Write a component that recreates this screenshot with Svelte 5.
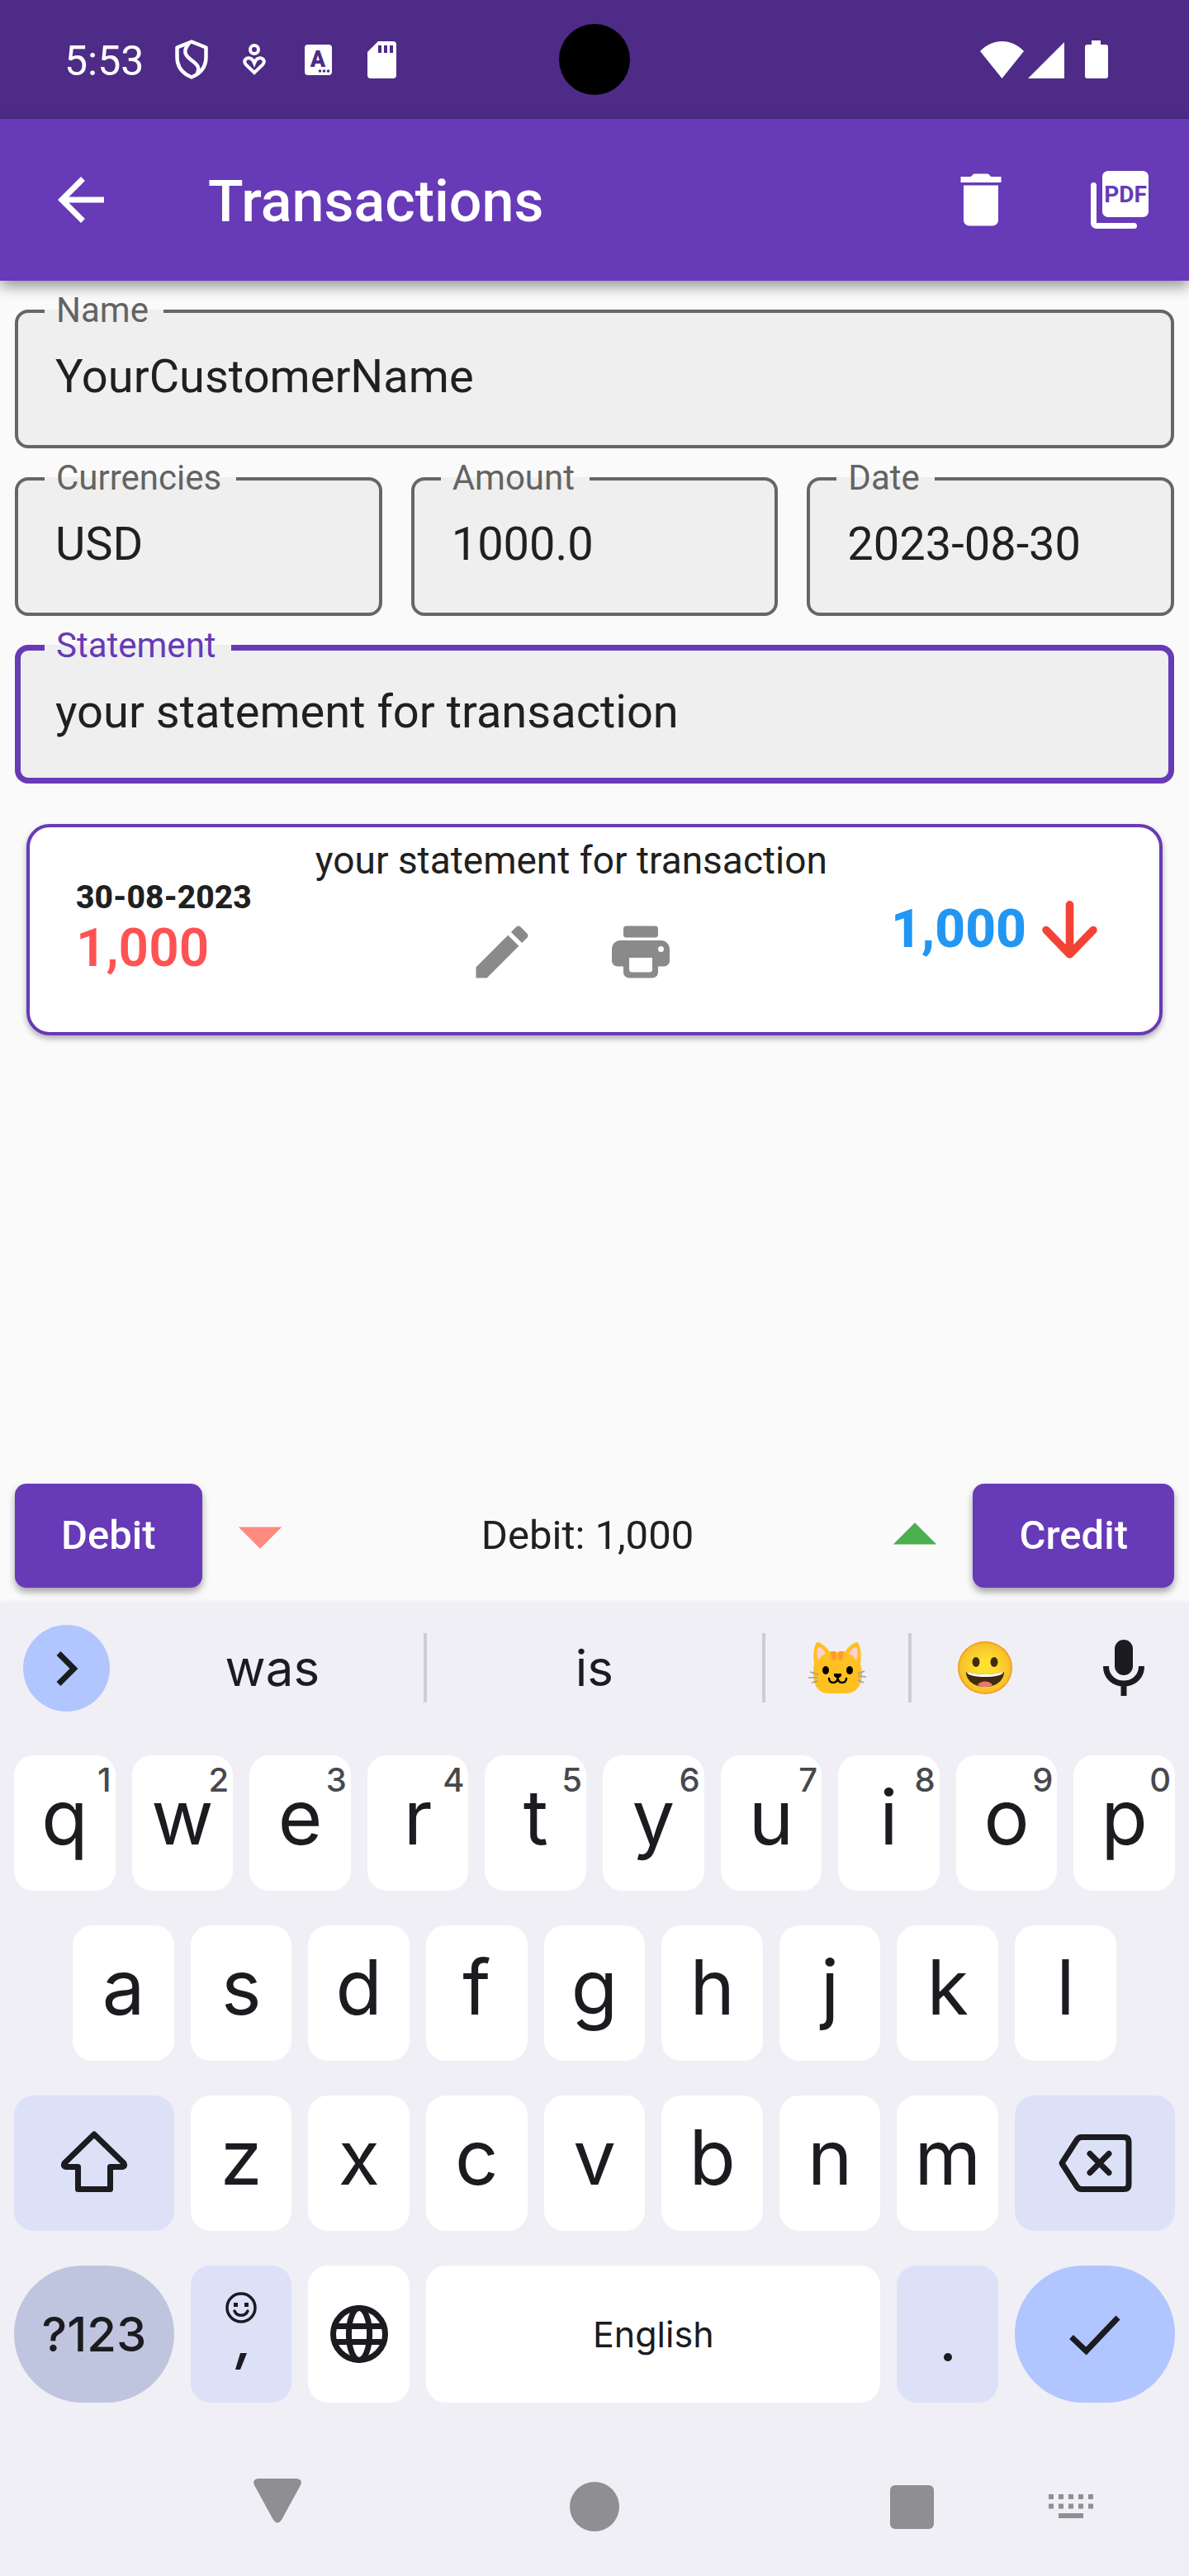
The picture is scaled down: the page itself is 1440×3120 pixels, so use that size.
<script>
  let name = $state('YourCustomerName');
  let currency = $state('USD');
  let amount = $state('1000.0');
  let date = $state('2023-08-30');
  let statement = $state('your statement for transaction');

  const topRow = [...'qwertyuiop'].map((letter, i) => ({ letter, hint: (i + 1) % 10 }));
  const homeRow = [...'asdfghjkl'];
  const bottomRow = [...'zxcvbnm'];
</script>

<div class="screen">
  <div class="status">
    <span class="clock">5:53</span>
    <svg class="shield" viewBox="0 0 40 48" fill="none" stroke="#fff" stroke-width="4.500" stroke-linejoin="round">
      <path d="M20 2.500L37.500 9.500V21C37.500 33 31 41 20 45.500C9 41 2.500 33 2.500 21V9.500Z" />
      <path d="M17 4C9 14 12 19 20 25C28 31 30 34 27 41" />
    </svg>
    <svg class="heart" viewBox="0 0 28 38" fill="none" stroke="#fff" stroke-width="4">
      <circle cx="14" cy="7" r="5" />
      <path d="M14 35L4 25.500C-.5 20 5 15.500 10 18C12 19 13 21 14 23.500C15 21 16 19 18 18C23 15.500 28.500 20 24 25.500Z" />
    </svg>
    <svg class="letter" viewBox="0 0 33 37">
      <rect width="33" height="37" rx="4" fill="#fff" />
      <text x="16" y="27" text-anchor="middle">A</text>
      <g fill="#4d2b87"><circle cx="18.500" cy="32" r="1.800" /><circle cx="23.500" cy="32" r="1.800" /><circle cx="28.500" cy="32" r="1.800" /></g>
    </svg>
    <svg class="sd" viewBox="0 0 35 45">
      <path d="M13 0H31Q35 0 35 4V41Q35 45 31 45H4Q0 45 0 41V13Z" fill="#fff" />
      <path d="M15 5v9M22 5v9M29 5v9" stroke="#4d2b87" stroke-width="4" />
    </svg>
    <div class="camera"></div>
    <svg class="signals" viewBox="0 0 156 46" fill="#fff">
      <path d="M0 13C15-3 38-3 53 13L26.500 46Z" />
      <path d="M58 46L102 2V46Z" />
      <path d="M135 0h11v5h6q3 0 3 3v35q0 3-3 3h-22q-3 0-3-3v-35q0-3 3-3h5z" />
    </svg>
  </div>

  <header class="appbar">
    <button class="back" aria-label="Back">
      <svg class="icon" viewBox="0 0 24 24"><path d="M20 11H7.830l5.590-5.590L12 4l-8 8 8 8 1.410-1.410L7.830 13H20v-2z" /></svg>
    </button>
    <h1>Transactions</h1>
    <button class="tool" aria-label="Delete">
      <svg class="icon" viewBox="0 0 24 24"><path d="M6 19c0 1.100.9 2 2 2h8c1.100 0 2-.9 2-2V7H6v12zM19 4h-3.500l-1-1h-5l-1 1H5v2h14V4z" /></svg>
    </button>
    <button class="tool" aria-label="Export">
      <svg class="icon" viewBox="0 0 24 24">
        <path d="M8 2h12c1.100 0 2 .9 2 2v12c0 1.100-.9 2-2 2H8c-1.100 0-2-.9-2-2V4c0-1.100.9-2 2-2z" />
        <path d="M3 7v13c0 .6.400 1 1 1h13" fill="none" stroke="#fff" stroke-width="2" stroke-linecap="round" />
        <text class="pdf" x="14" y="12.900" text-anchor="middle">PDF</text>
      </svg>
    </button>
  </header>

  <main>
    <form>
      <div class="field">
        <label for="name">Name</label>
        <input id="name" type="text" bind:value={name} />
      </div>
      <div class="row">
        <div class="field">
          <label for="currency">Currencies</label>
          <input id="currency" type="text" bind:value={currency} />
        </div>
        <div class="field">
          <label for="amount">Amount</label>
          <input id="amount" type="text" bind:value={amount} />
        </div>
        <div class="field">
          <label for="date">Date</label>
          <input id="date" type="text" bind:value={date} />
        </div>
      </div>
      <div class="field active">
        <label for="statement">Statement</label>
        <input id="statement" type="text" bind:value={statement} />
      </div>
    </form>

    <article class="card">
      <div class="lead">
        <strong class="day">30-08-2023</strong>
        <span class="owed">1,000</span>
      </div>
      <div class="middle">
        <p>your statement for transaction</p>
        <div class="actions">
          <button aria-label="Edit">
            <svg class="icon" viewBox="0 0 24 24"><path d="M3 17.250V21h3.750L17.810 9.940l-3.750-3.750L3 17.250zM20.710 7.040c.39-.39.39-1.020 0-1.410l-2.340-2.340c-.39-.39-1.020-.39-1.410 0l-1.830 1.830 3.750 3.750 1.830-1.830z" /></svg>
          </button>
          <button aria-label="Print">
            <svg class="icon" viewBox="0 0 24 24" fill-rule="evenodd">
              <path d="M7 3h10q1 0 1 1v2q0 1-1 1H7q-1 0-1-1V4q0-1 1-1z" />
              <path d="M5 8h14c1.660 0 3 1.340 3 3v4c0 1.100-.9 2-2 2h-2v2c0 1.100-.9 2-2 2H8c-1.100 0-2-.9-2-2v-2H4c-1.100 0-2-.9-2-2v-4c0-1.660 1.340-3 3-3zM8 14v4q0 1 1 1h6q1 0 1-1v-4zM19 10a1 1 0 1 0 0 2a1 1 0 1 0 0-2z" />
            </svg>
          </button>
        </div>
      </div>
      <div class="trail">
        <strong>1,000</strong>
        <svg viewBox="0 0 24 24" fill="none" stroke="#f44336" stroke-width="2.200" stroke-linecap="round" stroke-linejoin="round">
          <path d="M12 5v13.500M5.500 12L12 18.700L18.500 12" />
        </svg>
      </div>
    </article>
  </main>

  <footer>
    <button class="solid">Debit</button>
    <svg class="caret down" viewBox="0 0 24 24"><path d="M7 10l5 5 5-5z" /></svg>
    <span class="total">Debit: 1,000</span>
    <svg class="caret up" viewBox="0 0 24 24"><path d="M7 14l5-5 5 5z" /></svg>
    <button class="solid">Credit</button>
  </footer>

  <section class="keyboard" aria-label="Keyboard">
    <div class="suggest">
      <button class="more" aria-label="More">
        <svg viewBox="0 0 105 105" fill="none" stroke="#1b1b20" stroke-width="7"><path d="M43 34.500L61.500 53L43 71.500" /></svg>
      </button>
      <button class="word">was</button>
      <button class="word long">is</button>
      <button class="emoji ruled" aria-label="Cat">
        <svg viewBox="0 0 70 64">
          <path d="M7 27C5 14 8 1 11 1C15 1 22 7 26 13H44C48 7 55 1 59 1C62 1 65 14 63 27C64 31 65 35 65 40C65 55 56 63 46 63H24C14 63 6 55 6 40C6 35 6 31 7 27Z" fill="#ffc022" />
          <path d="M12 7C16 7 19 11 21 15C16 17 14 20 12 23C10 17 10 10 12 7ZM58 7C54 7 51 11 49 15C54 17 56 20 58 23C60 17 60 10 58 7Z" fill="#ffd0d3" />
          <path d="M27 12H33L34 18C33 25 29 25 28 19ZM43 12H37L36 18C37 25 41 25 42 19Z" fill="#ff9b2f" />
          <ellipse cx="21" cy="35" rx="4" ry="5" />
          <ellipse cx="50" cy="35" rx="4" ry="5" />
          <path d="M31 39h9v3l-4 3h-1l-4-3z" />
          <path d="M25 45C25 51 34 52 35.500 45C37 52 46 51 46 45" fill="none" stroke="#000" stroke-width="2.500" stroke-linecap="round" />
          <path d="M2 37L12 40M0 44L11 44M4 50L12 48M68 36L60 39M70 43L60 42M67 50L60 47" stroke="#9e9e9e" stroke-width="1.500" />
        </svg>
      </button>
      <button class="emoji" aria-label="Grin">
        <svg viewBox="0 0 68 66">
          <defs>
            <radialGradient id="face"><stop offset=".3" stop-color="#fde030" /><stop offset=".92" stop-color="#f7c02b" /><stop offset="1" stop-color="#f08f0c" /></radialGradient>
          </defs>
          <ellipse cx="34" cy="33" rx="33" ry="32" fill="url(#face)" />
          <ellipse cx="23" cy="26" rx="4.500" ry="6" fill="#422b0d" />
          <ellipse cx="45" cy="26" rx="4.500" ry="6" fill="#422b0d" />
          <path d="M11 38C24 42 44 42 57 38C57 48 48 56 34 56C20 56 11 48 11 38Z" fill="#422b0d" />
          <path d="M12 38C24 42 44 42 56 38C56 46 12 46 12 38Z" fill="#fff" />
          <path d="M25 54C28 48 40 48 43 54C38 57 30 57 25 54Z" fill="#ed7770" />
        </svg>
      </button>
      <button class="mic" aria-label="Voice input">
        <svg viewBox="0 0 50 68" fill="none" stroke="#1b1b20" stroke-width="7">
          <rect x="14" y="0" width="22" height="43" rx="11" fill="#1b1b20" stroke="none" />
          <path d="M3.500 32C3.500 60 46.500 60 46.500 32M25 53V68" />
        </svg>
      </button>
    </div>

    <div class="keys">
      {#each topRow as key}
        <button class="key">{key.letter}<span class="hint">{key.hint}</span></button>
      {/each}

      {#each homeRow as letter}
        <button class="key" class:indent={letter === 'a'}>{letter}</button>
      {/each}

      <button class="key wide tint shift" aria-label="Shift">
        <svg class="glyph" viewBox="0 0 84 84" fill="none" stroke="#1b1b20" stroke-width="7" stroke-linejoin="round">
          <path d="M42 7L78 42Q80 46 76 46.500H61.500V73.500H22.500V46.500H8Q4 46 6 42Z" />
        </svg>
      </button>
      {#each bottomRow as letter}
        <button class="key">{letter}</button>
      {/each}
      <button class="key wide tint" aria-label="Backspace">
        <svg class="erase" viewBox="0 0 90 70" fill="none" stroke="#1b1b20" stroke-width="7" stroke-linejoin="round">
          <path d="M5 35L23 7Q25 3.500 29 3.500H80Q86 3.500 86 9V61Q86 66.500 80 66.500H29Q25 66.500 23 63Z" />
          <path d="M39 23.500L62 46.500M62 23.500L39 46.500" stroke-linecap="round" />
        </svg>
      </button>

      <button class="key wide pill symbols">?123</button>
      <button class="key tint comma" aria-label="Emoji and comma">
        <svg class="smiley" viewBox="0 0 38 38" fill="none" stroke="#1b1b20" stroke-width="3.500">
          <circle cx="19" cy="19" r="17" />
          <path d="M11 23C14 30 24 30 27 23" stroke-linecap="round" />
          <path d="M12.500 13v5M25.500 13v5" stroke-width="5" />
        </svg>
        <svg class="tick" viewBox="0 0 14 20"><path d="M6 0H14L6 20H0Z" /></svg>
      </button>
      <button class="key" aria-label="Language">
        <svg class="glyph" viewBox="0 0 24 24" fill="none" stroke="#1b1b20" stroke-width="2">
          <circle cx="12" cy="12" r="9" />
          <ellipse cx="12" cy="12" rx="3.600" ry="9" />
          <path d="M3.500 9.300h17M3.500 14.700h17" />
        </svg>
      </button>
      <button class="key space">English</button>
      <button class="key tint dot" aria-label="Period"><span class="point"></span></button>
      <button class="key wide pill enter" aria-label="Done">
        <svg class="glyph" viewBox="0 0 84 84" fill="none" stroke="#1b1b20" stroke-width="7"><path d="M13.500 45.500L31.500 62.500L70 22" /></svg>
      </button>
    </div>

    <nav aria-label="System">
      <button class="hide" aria-label="Hide keyboard">
        <svg class="glyph" viewBox="0 0 84 84"><path d="M19 8H65Q73 9 70 16L47 58Q42 65 37 58L14 16Q11 9 19 8Z" /></svg>
      </button>
      <button class="home" aria-label="Home">
        <svg class="glyph" viewBox="0 0 84 84"><circle cx="42" cy="42" r="30" /></svg>
      </button>
      <button class="recent" aria-label="Recent apps">
        <svg class="glyph" viewBox="0 0 84 84"><rect x="16" y="16" width="53" height="53" rx="6" /></svg>
      </button>
      <button class="switch" aria-label="Switch keyboard">
        <svg class="glyph" viewBox="0 0 84 84" fill="none" stroke="#8f8f92" stroke-width="6">
          <path d="M16 30h54M16 41.500h54" stroke-dasharray="6 6" />
          <path d="M28 53h30" />
        </svg>
      </button>
    </nav>
  </section>
</div>

<style>
  :global(body) {
    background: #fafafa;
  }

  .screen {
    display: flex;
    flex-direction: column;
    min-height: 100vh;
    font-family: Roboto, 'Liberation Sans', sans-serif;
    color: #202020;
  }

  button {
    display: flex;
    align-items: center;
    justify-content: center;
    padding: 0;
    border: 0;
    background: none;
    font: inherit;
    color: inherit;
  }

  svg {
    display: block;
    flex: none;
  }

  .icon {
    width: 84px;
    height: 84px;
    fill: currentColor;
  }

  /* Status bar */
  .status {
    position: relative;
    display: flex;
    align-items: center;
    height: 144px;
    padding: 0 97px 0 78px;
    background: #4d2b87;
    color: #fff;
  }

  .clock {
    margin-right: 38px;
    padding-top: 4px;
    font-size: 50px;
    line-height: 58px;
  }

  .shield {
    width: 40px;
    height: 48px;
    margin-right: 42px;
  }

  .heart {
    width: 28px;
    height: 38px;
    margin-right: 47px;
  }

  .letter {
    width: 33px;
    height: 37px;
    margin-right: 43px;
  }

  .letter text {
    fill: #4d2b87;
    font-size: 27px;
    font-weight: 900;
  }

  .sd {
    width: 35px;
    height: 45px;
  }

  .camera {
    position: absolute;
    top: 50%;
    left: 50%;
    width: 86px;
    height: 86px;
    border-radius: 50%;
    background: #000;
    transform: translate(-50%, -50%);
  }

  .signals {
    width: 156px;
    height: 46px;
    margin-left: auto;
  }

  /* App bar */
  .appbar {
    position: relative;
    display: flex;
    align-items: center;
    height: 196px;
    background: #673ab7;
    color: #fff;
    box-shadow: 0 7px 16px rgba(0, 0, 0, 0.4);
  }

  .back {
    width: 196px;
    height: 168px;
  }

  .tool {
    width: 168px;
    height: 168px;
  }

  h1 {
    flex: 1;
    margin: 0;
    padding: 4px 0 0 56px;
    font-size: 70px;
    font-weight: 500;
    line-height: 82px;
  }

  .pdf {
    fill: #673ab7;
    font-size: 8px;
    font-weight: 700;
  }

  /* Form */
  main {
    flex: 1;
    padding: 35px 18px;
  }

  form {
    display: grid;
    gap: 35px;
  }

  .row {
    display: grid;
    grid-template-columns: repeat(3, 1fr);
    gap: 35px;
  }

  .field {
    position: relative;
    height: 168px;
  }

  .field label {
    position: absolute;
    top: -23px;
    left: 36px;
    padding: 0 18px 0 14px;
    background: linear-gradient(#efefef, #efefef) no-repeat 0 23px / 100% 7px;
    color: #636363;
    font-size: 42px;
    line-height: 48px;
  }

  .field input {
    box-sizing: border-box;
    width: 100%;
    height: 100%;
    padding: 0 45px 6px;
    border: 4px solid #666;
    border-radius: 16px;
    outline: 0;
    background: #efefef;
    color: #202020;
    font: 400 56px / 66px Roboto, 'Liberation Sans', sans-serif;
  }

  .active label {
    color: #673ab7;
  }

  .active input {
    padding: 0 42px 6px;
    border: 7px solid #673ab7;
  }

  /* Transaction card */
  .card {
    display: flex;
    align-items: center;
    gap: 56px;
    margin: 49px 14px 0;
    padding: 13px 56px;
    border: 4px solid #673ab7;
    border-radius: 28px;
    background: #fff;
    box-shadow: 0 4px 7px rgba(0, 0, 0, 0.3);
  }

  .lead {
    display: flex;
    flex-direction: column;
  }

  .day {
    font-size: 39px;
    font-weight: 800;
    line-height: 46px;
  }

  .owed {
    color: #ff5252;
    font-size: 64px;
    font-weight: 600;
    line-height: 78px;
  }

  .middle {
    display: flex;
    flex: 1;
    flex-direction: column;
    align-items: center;
  }

  .middle p {
    margin: 0;
    font-size: 46px;
    line-height: 54px;
  }

  .actions {
    display: flex;
    color: #8a8a8a;
  }

  .actions button {
    width: 168px;
    height: 168px;
  }

  .trail {
    display: flex;
    align-items: center;
    color: #2196f3;
    font-size: 64px;
    line-height: 78px;
  }

  .trail strong {
    font-weight: 800;
  }

  .trail svg {
    width: 105px;
    height: 105px;
  }

  /* Totals */
  footer {
    display: flex;
    align-items: center;
    padding: 0 18px 18px;
    font-size: 49px;
    line-height: 58px;
  }

  .solid {
    height: 126px;
    padding: 0 56px;
    border-radius: 14px;
    background: #673ab7;
    color: #fff;
    font-weight: 500;
    box-shadow: 0 5px 9px rgba(0, 0, 0, 0.35);
  }

  .caret {
    width: 140px;
    height: 126px;
  }

  .down {
    fill: #ff8a80;
  }

  .up {
    fill: #4caf50;
  }

  .total {
    flex: 1;
    text-align: center;
  }

  /* Keyboard */
  .keyboard {
    background: #f0eff6;
    color: #1b1b20;
    font-family: Inter, 'Liberation Sans', sans-serif;
    box-shadow: 0 0 6px rgba(0, 0, 0, 0.08);
  }

  .suggest {
    display: flex;
    align-items: center;
    height: 158px;
  }

  .more {
    width: 105px;
    height: 105px;
    margin: 0 14px 0 28px;
    border-radius: 50%;
    background: #b1c5ff;
  }

  .more svg {
    width: 105px;
    height: 105px;
  }

  .word {
    box-sizing: border-box;
    flex: 9 1 0;
    height: 84px;
    border-right: 4px solid #cdccd3;
    font-size: 60px;
    line-height: 72px;
  }

  .long {
    flex-grow: 10;
  }

  .emoji {
    width: 177px;
    height: 84px;
  }

  .ruled {
    border-right: 4px solid #cdccd3;
  }

  .emoji svg {
    width: 70px;
    height: 66px;
  }

  .mic {
    width: 159px;
    height: 84px;
  }

  .mic svg {
    width: 50px;
    height: 68px;
  }

  .keys {
    display: grid;
    grid-template-columns: repeat(20, 1fr);
    grid-template-rows: 164px 164px 164px 166px;
    gap: 42px 20px;
    padding: 27px 17px 0;
  }

  .key {
    position: relative;
    grid-column: span 2;
    border-radius: 24px;
    background: #fff;
    font-size: 92px;
    line-height: 110px;
  }

  .key:not(:has(svg)) {
    padding-bottom: 14px;
  }

  .indent {
    grid-column: 2 / span 2;
  }

  .shift {
    grid-column: 1 / span 3;
  }

  .wide:not(.shift) {
    grid-column: span 3;
  }

  .tint {
    background: #dde1f8;
  }

  .pill {
    border-radius: 84px;
  }

  .hint {
    position: absolute;
    top: 6px;
    right: 5px;
    color: #48484c;
    font-size: 40px;
    font-weight: 500;
    line-height: 48px;
  }

  .glyph {
    width: 84px;
    height: 84px;
  }

  .erase {
    width: 90px;
    height: 70px;
  }

  .key.symbols {
    padding-bottom: 0;
    background: #c0c5df;
    font-size: 58px;
    font-weight: 500;
    line-height: 70px;
  }

  .key.comma {
    flex-direction: column;
    gap: 36px;
    padding-bottom: 8px;
  }

  .smiley {
    width: 38px;
    height: 38px;
  }

  .tick {
    width: 14px;
    height: 20px;
    fill: #1b1b20;
  }

  .key.space {
    grid-column: span 8;
    padding-bottom: 0;
    font-size: 43px;
    line-height: 52px;
  }

  .key.dot {
    align-items: flex-end;
    padding-bottom: 50px;
  }

  .point {
    width: 10px;
    height: 10px;
    border-radius: 50%;
    background: #1b1b20;
  }

  .enter {
    background: #b1c5ff;
  }

  /* System navigation */
  nav {
    display: grid;
    grid-template-columns: repeat(15, 1fr);
    align-items: center;
    height: 168px;
    padding-top: 42px;
    fill: #8f8f92;
  }

  .hide {
    grid-column: 3 / span 3;
  }

  .home {
    grid-column: 7 / span 3;
  }

  .recent {
    grid-column: 11 / span 3;
  }

  .switch {
    grid-column: 14;
  }
</style>
